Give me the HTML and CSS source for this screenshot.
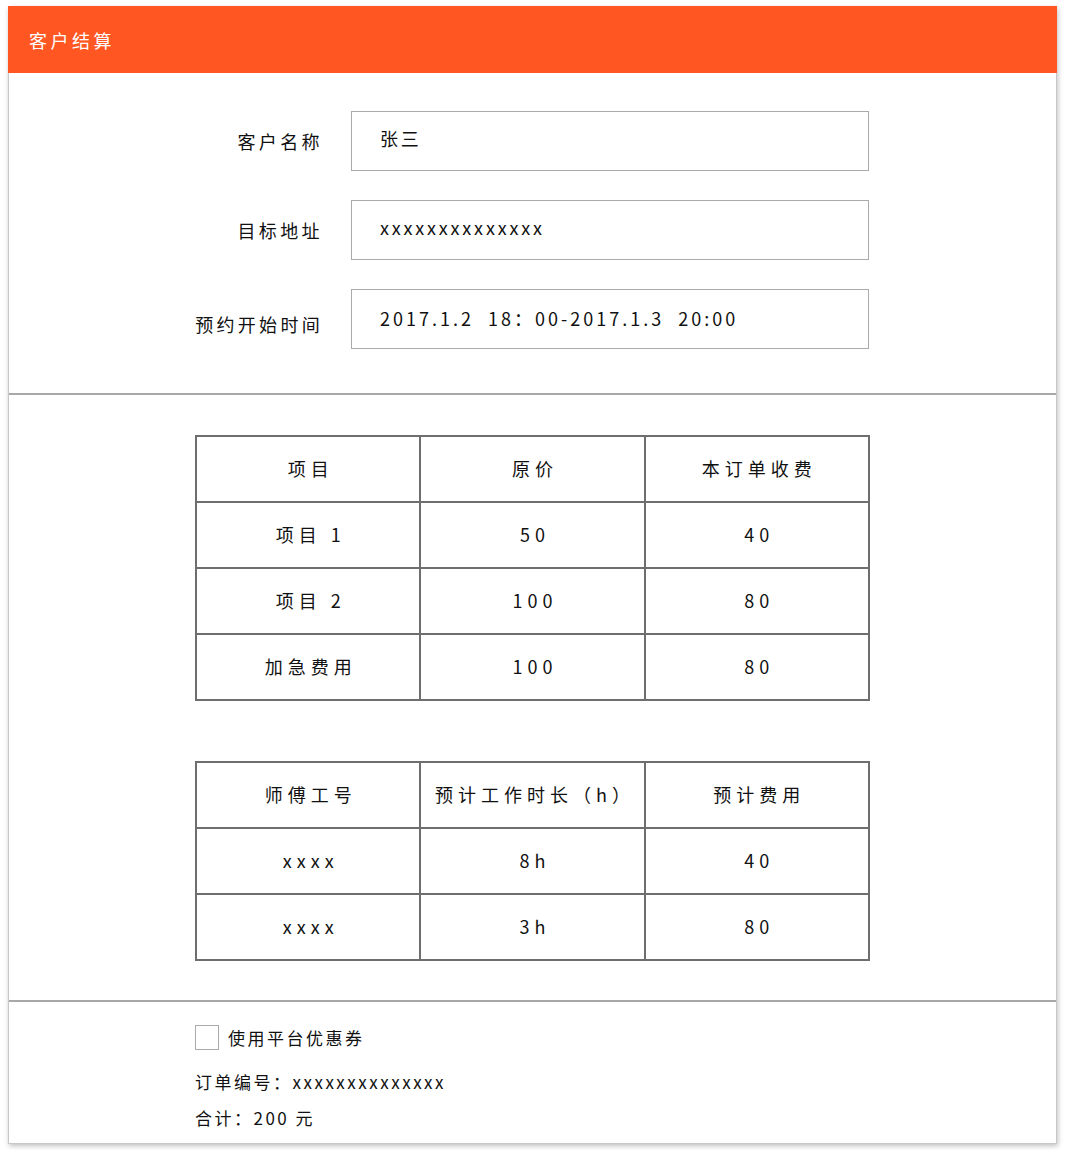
FILE: index.html
```html
<!DOCTYPE html>
<html lang="zh-CN">
<head>
    <meta charset="UTF-8">
    <meta name="viewport" content="width=device-width, initial-scale=1.0">
    <title>客户结算</title>
    <link rel="stylesheet" href="styles.css">
</head>
<body>

    <div class="card">
        <div class="header">客户结算</div>

        <!-- Datos del cliente -->
        <div class="section form-section">
            <div class="form-row">
                <label class="form-label">客户名称</label>
                <div class="form-input">张三</div>
            </div>
            <div class="form-row">
                <label class="form-label">目标地址</label>
                <div class="form-input">xxxxxxxxxxxxxx</div>
            </div>
            <div class="form-row">
                <label class="form-label label-low">预约开始时间</label>
                <div class="form-input input-date">2017.1.2&nbsp;&nbsp;18：00-2017.1.3&nbsp;&nbsp;20:00</div>
            </div>
        </div>

        <!-- Tablas de precios -->
        <div class="section tables-section">
            <table class="price-table">
                <tr><td>项目</td><td>原价</td><td>本订单收费</td></tr>
                <tr><td>项目 1</td><td>50</td><td>40</td></tr>
                <tr><td>项目 2</td><td>100</td><td>80</td></tr>
                <tr><td>加急费用</td><td>100</td><td>80</td></tr>
            </table>

            <table class="price-table">
                <tr><td>师傅工号</td><td>预计工作时长（h）</td><td>预计费用</td></tr>
                <tr><td>xxxx</td><td>8h</td><td>40</td></tr>
                <tr><td>xxxx</td><td>3h</td><td>80</td></tr>
            </table>
        </div>

        <!-- Resumen -->
        <div class="summary">
            <div class="coupon">
                <span class="checkbox"></span>
                <span>使用平台优惠券</span>
            </div>
            <div class="summary-line order-line">订单编号：xxxxxxxxxxxxxx</div>
            <div class="summary-line">合计：200 元</div>
        </div>
    </div>

</body>
</html>
```

FILE: styles.css
```css
body {
    margin: 0;
    padding: 6px 8px;
    font-family: "Noto Sans CJK SC", "Noto Sans", sans-serif;
    background-color: #FFFFFF;
    color: #111111;
}

.card {
    width: 1047px;
    border: 1px solid #C8C8C8;
    box-shadow: 1px 2px 5px rgba(0, 0, 0, 0.25);
    background: white;
}

.header {
    height: 67px;
    background-color: #FF5622;
    color: #FFFFFF;
    font-size: 18px;
    letter-spacing: 3.5px;
    display: flex;
    align-items: center;
    padding-left: 21px;
    margin: -1px -1px 0 -1px;
}

.section {
    border-bottom: 2px solid #A8A8A8;
}

.form-section {
    padding: 38px 0 44px 0;
    display: flex;
    flex-direction: column;
    gap: 29px;
}

.form-row {
    margin-left: 186px;
    display: flex;
    align-items: center;
    gap: 28px;
}

.form-label {
    width: 128px;
    flex-shrink: 0;
    text-align: right;
    white-space: nowrap;
    font-size: 18px;
    letter-spacing: 3.4px;
}

.label-low {
    margin-top: 10px;
    letter-spacing: 3.3px;
}

.form-input {
    box-sizing: border-box;
    width: 518px;
    height: 60px;
    border: 1px solid #AAAAAA;
    padding: 0 0 6px 28px;
    display: flex;
    align-items: center;
    font-size: 18px;
    letter-spacing: 2.8px;
}

.input-date {
    letter-spacing: 3px;
    padding-bottom: 2px;
}

.tables-section {
    padding: 40px 0 39px 186px;
    display: flex;
    flex-direction: column;
    gap: 60px;
}

.price-table {
    border-collapse: collapse;
    width: 675px;
}

.price-table td {
    border: 2px solid #6E6E6E;
    width: 33.33%;
    height: 62px;
    padding: 0 0 2px 5px;
    text-align: center;
    font-size: 18px;
    letter-spacing: 5px;
}

.summary {
    padding: 22px 0 12px 186px;
    font-size: 17px;
    letter-spacing: 2.5px;
}

.coupon {
    display: flex;
    align-items: center;
    gap: 9px;
    height: 26px;
}

.checkbox {
    display: inline-block;
    width: 22px;
    height: 23px;
    border: 1px solid #AAAAAA;
}

.summary-line {
    margin-top: 10px;
    line-height: 26px;
}

.order-line {
    margin-top: 19px;
}
```
